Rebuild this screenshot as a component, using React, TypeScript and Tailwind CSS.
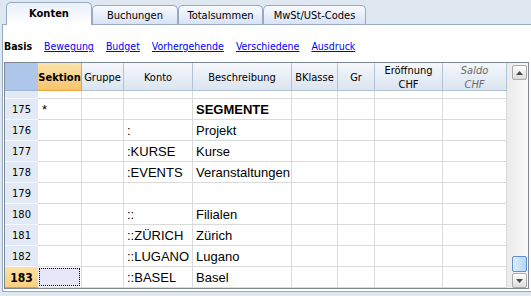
import React from "react";

const cols = ["w-[33px]", "w-[44px]", "w-[42px]", "w-[69px]", "w-[99px]", "w-[46px]", "w-[37px]", "w-[68px]", "w-[64px]"];

type Row = { n: number; sek?: string; konto?: string; desc?: string; bold?: boolean; sel?: boolean };

const rows: Row[] = [
  { n: 175, sek: "*", desc: "SEGMENTE", bold: true },
  { n: 176, konto: ":", desc: "Projekt" },
  { n: 177, konto: ":KURSE", desc: "Kurse" },
  { n: 178, konto: ":EVENTS", desc: "Veranstaltungen" },
  { n: 179 },
  { n: 180, konto: "::", desc: "Filialen" },
  { n: 181, konto: "::ZÜRICH", desc: "Zürich" },
  { n: 182, konto: "::LUGANO", desc: "Lugano" },
  { n: 183, konto: "::BASEL", desc: "Basel", sel: true },
];

function Tab({ w, children }: { w: string; children: React.ReactNode }) {
  return (
    <div
      className={`${w} h-[19px] rounded-t-[5px] border border-b-0 border-[#97aac4] bg-gradient-to-b from-[#f8faff] to-[#d9e3f4] flex items-center justify-center pt-[2px]`}
    >
      {children}
    </div>
  );
}

function HeadCell({ w, children, extra = "" }: { w: string; children?: React.ReactNode; extra?: string }) {
  return (
    <div
      className={`${w} h-full shrink-0 border-r border-b border-[#b3c3d7] bg-gradient-to-b from-[#f5f8fc] to-[#dbe4f0] flex flex-col items-center justify-center text-center leading-[14px] pt-[3px] ${extra}`}
    >
      {children}
    </div>
  );
}

function Cell({ w, children, extra = "" }: { w: string; children?: React.ReactNode; extra?: string }) {
  return (
    <div
      className={`${w} h-full shrink-0 border-r border-b border-[#dadada] flex items-center pl-[3px] pt-[2px] font-['Liberation_Sans',Arial,sans-serif] text-[13px] whitespace-nowrap overflow-hidden ${extra}`}
    >
      {children}
    </div>
  );
}

function Arrow({ down }: { down?: boolean }) {
  return (
    <svg width="7" height="4" viewBox="0 0 7 4" className={down ? "rotate-180" : ""}>
      <path d="M3.5 0 L7 4 L0 4 Z" fill="#4a4a4a" />
    </svg>
  );
}

export default function App() {
  return (
    <div className="w-[531px] h-[296px] overflow-hidden bg-[#dfe7f0] font-[family-name:'DejaVu_Sans_Condensed','DejaVu_Sans',sans-serif] text-[11px] text-black">
      {/* Tabs */}
      <div className="h-[24px] flex items-end pl-[6px]">
        <div className="relative z-10 -mb-px h-[23px] w-[86px] rounded-t-[5px] border border-b-0 border-[#97aac4] bg-gradient-to-b from-[#eaf0fb] to-white flex items-center justify-center font-bold">
          Konten
        </div>
        <Tab w="w-[86px]">Buchungen</Tab>
        <Tab w="w-[85px]">Totalsummen</Tab>
        <Tab w="w-[103px]">MwSt/USt-Codes</Tab>
      </div>

      {/* Panel */}
      <div className="ml-[2px] h-[268px] border-l border-t border-b border-[#97aac4] bg-white">
        <div className="h-[37px] flex items-center gap-[12px] pl-[1px] pt-[7px] text-[10.5px]">
          <span className="font-bold">Basis</span>
          <span className="text-[#0000ff] underline">Bewegung</span>
          <span className="text-[#0000ff] underline">Budget</span>
          <span className="text-[#0000ff] underline">Vorhergehende</span>
          <span className="text-[#0000ff] underline">Verschiedene</span>
          <span className="text-[#0000ff] underline">Ausdruck</span>
        </div>

        {/* Grid */}
        <div className="ml-[1px] w-[525px] h-[227px] border border-[#7d8895] flex">
          <div className="w-[502px] flex flex-col">
            {/* Header */}
            <div className="h-[28px] flex">
              <div className={`${cols[0]} h-full shrink-0 bg-[#adc6ea] border-b border-[#9db6da]`} />
              <div className={`${cols[1]} h-full shrink-0 border-r border-b border-[#eda43c] bg-gradient-to-b from-[#fbe3aa] to-[#f6c46c] flex items-center justify-center font-bold pt-[3px]`}>
                Sektion
              </div>
              <HeadCell w={cols[2]}>Gruppe</HeadCell>
              <HeadCell w={cols[3]}>Konto</HeadCell>
              <HeadCell w={cols[4]}>Beschreibung</HeadCell>
              <HeadCell w={cols[5]}>BKlasse</HeadCell>
              <HeadCell w={cols[6]}>Gr</HeadCell>
              <HeadCell w={cols[7]}>
                <span>Eröffnung</span>
                <span>CHF</span>
              </HeadCell>
              <HeadCell w={cols[8]} extra="italic text-[#6a6a6a]">
                <span>Saldo</span>
                <span>CHF</span>
              </HeadCell>
            </div>

            {/* Partial row strip */}
            <div className="h-[8px] flex">
              <div className={`${cols[0]} h-full shrink-0 bg-[#e2eaf5] border-b border-[#f3f6fb]`} />
              <Cell w={cols[1]} />
              <Cell w={cols[2]} />
              <Cell w={cols[3]} />
              <Cell w={cols[4]} />
              <Cell w={cols[5]} />
              <Cell w={cols[6]} />
              <Cell w={cols[7]} />
              <Cell w={cols[8]} />
            </div>

            {rows.map((r) => (
              <div key={r.n} className="h-[21px] flex">
                {r.sel ? (
                  <div className={`${cols[0]} h-full shrink-0 bg-gradient-to-b from-[#fde0a2] to-[#fbcf80] border-b border-[#e6a03a] flex items-center justify-center font-bold text-[12px] pt-[2px]`}>
                    {r.n}
                  </div>
                ) : (
                  <div className={`${cols[0]} h-full shrink-0 bg-[#e2eaf5] border-b border-[#f3f6fb] flex items-center justify-center pt-[2px]`}>
                    {r.n}
                  </div>
                )}
                {r.sel ? (
                  <div className={`${cols[1]} h-full shrink-0 border-r border-b border-[#dadada] p-[1px]`}>
                    <div className="w-full h-full bg-[#e7e6f6] border border-dotted border-black" />
                  </div>
                ) : (
                  <Cell w={cols[1]} extra="pl-[4px]">{r.sek}</Cell>
                )}
                <Cell w={cols[2]} />
                <Cell w={cols[3]} extra="pl-[3px]">{r.konto}</Cell>
                <Cell w={cols[4]} extra={r.bold ? "font-bold" : ""}>{r.desc}</Cell>
                <Cell w={cols[5]} />
                <Cell w={cols[6]} />
                <Cell w={cols[7]} />
                <Cell w={cols[8]} />
              </div>
            ))}
          </div>

          {/* Scrollbar */}
          <div className="w-[21px] h-full bg-gradient-to-r from-[#ebebeb] to-[#f8f8f8] flex flex-col pl-[5px] pr-[1px]">
            <div className="mt-[2px] h-[15px] w-[15px] border border-[#a9a9a9] rounded-[2px] bg-gradient-to-b from-white to-[#dcdcdc] flex items-center justify-center">
              <Arrow />
            </div>
            <div className="flex-1" />
            <div className="h-[16px] w-[15px] mb-[1px] border border-[#5f8fcd] rounded-[2px] bg-gradient-to-r from-[#dcedfc] to-[#b5d6f6]" />
            <div className="h-[15px] w-[15px] border border-[#a9a9a9] rounded-[2px] bg-gradient-to-b from-white to-[#dcdcdc] flex items-center justify-center">
              <Arrow down />
            </div>
          </div>
        </div>
      </div>
    </div>
  );
}
